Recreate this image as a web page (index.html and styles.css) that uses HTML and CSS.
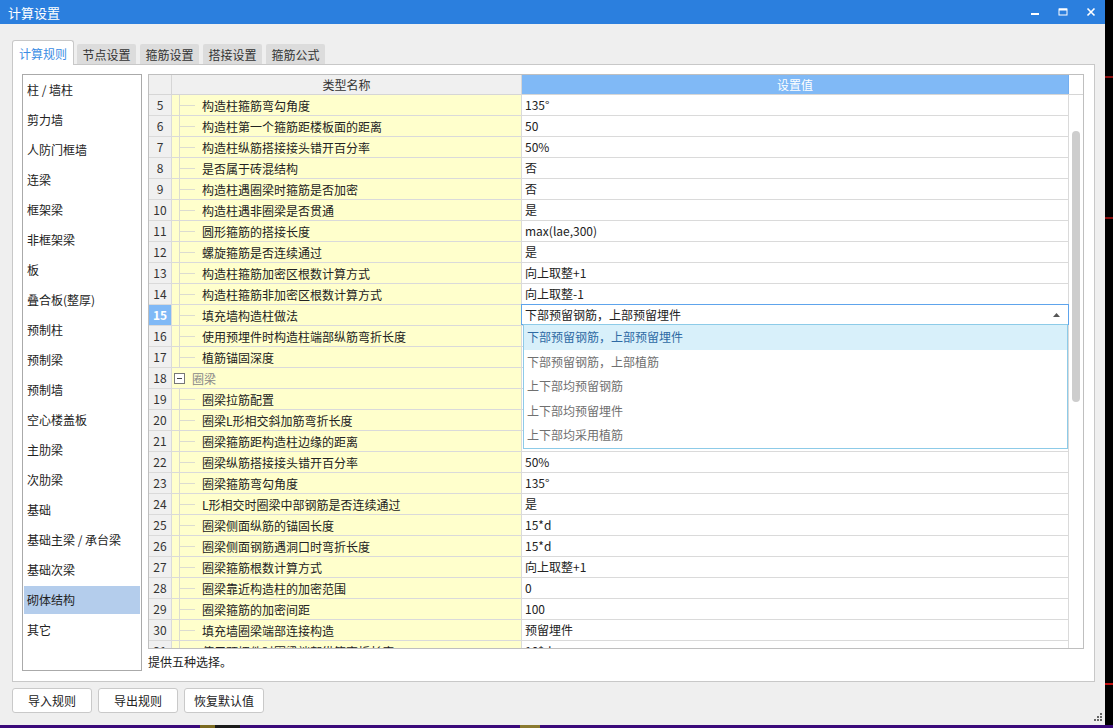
FILE: index.html
```html
<!DOCTYPE html>
<html lang="zh-CN">
<head>
<meta charset="utf-8">
<title>计算设置</title>
<link rel="stylesheet" href="styles.css">
</head>
<body>
<div class="screen">
  <div class="top">
    <div class="window">
      <div class="titlebar">
        <span class="title">计算设置</span>
        <span class="wbtn"><svg width="10" height="10" viewBox="0 0 10 10"><rect x="1" y="6" width="8" height="2" fill="#fff"/></svg></span>
        <span class="wbtn"><svg width="10" height="10" viewBox="0 0 10 10"><rect x="1" y="2" width="8" height="6" fill="none" stroke="#fff" stroke-width="1"/><rect x="1" y="1.5" width="8" height="2" fill="#fff"/></svg></span>
        <span class="wbtn"><svg width="10" height="10" viewBox="0 0 10 10"><path d="M1.5 1.5 L8.5 8.5 M8.5 1.5 L1.5 8.5" stroke="#fff" stroke-width="1.6"/></svg></span>
      </div>

      <div class="tabs">
        <div class="tab active">计算规则</div>
        <div class="tab">节点设置</div>
        <div class="tab">箍筋设置</div>
        <div class="tab">搭接设置</div>
        <div class="tab">箍筋公式</div>
      </div>

      <div class="panel">
        <ul class="side">
          <li>柱 / 墙柱</li>
          <li>剪力墙</li>
          <li>人防门框墙</li>
          <li>连梁</li>
          <li>框架梁</li>
          <li>非框架梁</li>
          <li>板</li>
          <li>叠合板(整厚)</li>
          <li>预制柱</li>
          <li>预制梁</li>
          <li>预制墙</li>
          <li>空心楼盖板</li>
          <li>主肋梁</li>
          <li>次肋梁</li>
          <li>基础</li>
          <li>基础主梁 / 承台梁</li>
          <li>基础次梁</li>
          <li class="sel">砌体结构</li>
          <li>其它</li>
        </ul>

        <div class="main">
          <div class="table">
            <div class="thead">
              <div class="th-num"></div>
              <div class="th-name">类型名称</div>
              <div class="th-val">设置值</div>
              <div class="th-gutter"></div>
            </div>
            <div class="tbody">
              <div class="rows">
                <div class="row"><div class="num">5</div><div class="name"><span class="tree"></span>构造柱箍筋弯勾角度</div><div class="val">135°</div></div>
                <div class="row"><div class="num">6</div><div class="name"><span class="tree"></span>构造柱第一个箍筋距楼板面的距离</div><div class="val">50</div></div>
                <div class="row"><div class="num">7</div><div class="name"><span class="tree"></span>构造柱纵筋搭接接头错开百分率</div><div class="val">50%</div></div>
                <div class="row"><div class="num">8</div><div class="name"><span class="tree"></span>是否属于砖混结构</div><div class="val">否</div></div>
                <div class="row"><div class="num">9</div><div class="name"><span class="tree"></span>构造柱遇圈梁时箍筋是否加密</div><div class="val">否</div></div>
                <div class="row"><div class="num">10</div><div class="name"><span class="tree"></span>构造柱遇非圈梁是否贯通</div><div class="val">是</div></div>
                <div class="row"><div class="num">11</div><div class="name"><span class="tree"></span>圆形箍筋的搭接长度</div><div class="val">max(lae,300)</div></div>
                <div class="row"><div class="num">12</div><div class="name"><span class="tree"></span>螺旋箍筋是否连续通过</div><div class="val">是</div></div>
                <div class="row"><div class="num">13</div><div class="name"><span class="tree"></span>构造柱箍筋加密区根数计算方式</div><div class="val">向上取整+1</div></div>
                <div class="row"><div class="num">14</div><div class="name"><span class="tree"></span>构造柱箍筋非加密区根数计算方式</div><div class="val">向上取整-1</div></div>
                <div class="row"><div class="num cur">15</div><div class="name"><span class="tree"></span>填充墙构造柱做法</div>
                  <div class="val editing">
                    <div class="combo">
                      <span class="combo-text">下部预留钢筋，上部预留埋件</span>
                      <svg class="caret" width="7" height="4" viewBox="0 0 7 4"><path d="M0 4 L3.5 0 L7 4 Z" fill="#555"/></svg>
                      <ul class="combo-list">
                        <li class="hi">下部预留钢筋，上部预留埋件</li>
                        <li>下部预留钢筋，上部植筋</li>
                        <li>上下部均预留钢筋</li>
                        <li>上下部均预留埋件</li>
                        <li>上下部均采用植筋</li>
                      </ul>
                    </div>
                  </div>
                </div>
                <div class="row"><div class="num">16</div><div class="name"><span class="tree"></span>使用预埋件时构造柱端部纵筋弯折长度</div><div class="val"></div></div>
                <div class="row"><div class="num">17</div><div class="name"><span class="tree"></span>植筋锚固深度</div><div class="val"></div></div>
                <div class="row"><div class="num">18</div><div class="name group"><span class="toggle"><svg width="11" height="11" viewBox="0 0 11 11"><rect x="0.5" y="0.5" width="10" height="10" fill="#fff" stroke="#777"/><rect x="3" y="5" width="5" height="1" fill="#444"/></svg></span><span class="gname">圈梁</span></div><div class="val"></div></div>
                <div class="row"><div class="num">19</div><div class="name"><span class="tree"></span>圈梁拉筋配置</div><div class="val"></div></div>
                <div class="row"><div class="num">20</div><div class="name"><span class="tree"></span>圈梁L形相交斜加筋弯折长度</div><div class="val"></div></div>
                <div class="row"><div class="num">21</div><div class="name"><span class="tree"></span>圈梁箍筋距构造柱边缘的距离</div><div class="val"></div></div>
                <div class="row"><div class="num">22</div><div class="name"><span class="tree"></span>圈梁纵筋搭接接头错开百分率</div><div class="val">50%</div></div>
                <div class="row"><div class="num">23</div><div class="name"><span class="tree"></span>圈梁箍筋弯勾角度</div><div class="val">135°</div></div>
                <div class="row"><div class="num">24</div><div class="name"><span class="tree"></span>L形相交时圈梁中部钢筋是否连续通过</div><div class="val">是</div></div>
                <div class="row"><div class="num">25</div><div class="name"><span class="tree"></span>圈梁侧面纵筋的锚固长度</div><div class="val">15*d</div></div>
                <div class="row"><div class="num">26</div><div class="name"><span class="tree"></span>圈梁侧面钢筋遇洞口时弯折长度</div><div class="val">15*d</div></div>
                <div class="row"><div class="num">27</div><div class="name"><span class="tree"></span>圈梁箍筋根数计算方式</div><div class="val">向上取整+1</div></div>
                <div class="row"><div class="num">28</div><div class="name"><span class="tree"></span>圈梁靠近构造柱的加密范围</div><div class="val">0</div></div>
                <div class="row"><div class="num">29</div><div class="name"><span class="tree"></span>圈梁箍筋的加密间距</div><div class="val">100</div></div>
                <div class="row"><div class="num">30</div><div class="name"><span class="tree"></span>填充墙圈梁端部连接构造</div><div class="val">预留埋件</div></div>
                <div class="row"><div class="num">31</div><div class="name"><span class="tree"></span>使用预埋件时圈梁端部纵筋弯折长度</div><div class="val">10*d</div></div>
              </div>
              <div class="gutter"><div class="thumb"></div></div>
            </div>
          </div>
          <div class="desc">提供五种选择。</div>
        </div>
      </div>

      <div class="buttons">
        <button class="btn">导入规则</button>
        <button class="btn">导出规则</button>
        <button class="btn">恢复默认值</button>
      </div>

      <svg class="grip" width="9" height="9" viewBox="0 0 9 9">
        <rect x="6" y="0" width="2" height="2" fill="#666"/>
        <rect x="3" y="3" width="2" height="2" fill="#666"/>
        <rect x="6" y="3" width="2" height="2" fill="#666"/>
        <rect x="0" y="6" width="2" height="2" fill="#666"/>
        <rect x="3" y="6" width="2" height="2" fill="#666"/>
        <rect x="6" y="6" width="2" height="2" fill="#666"/>
      </svg>
    </div>
    <div class="edge">
      <div class="mark m1"></div>
      <div class="mark m2"></div>
      <div class="mark m3"></div>
    </div>
  </div>
  <div class="taskbar"></div>
</div>
</body>
</html>
```

FILE: styles.css
```css
* { box-sizing: border-box; margin: 0; padding: 0; }
html, body { width: 1113px; height: 728px; overflow: hidden; }
body {
  background: #000;
  font-family: "Noto Sans CJK SC", "Microsoft YaHei", "Noto Sans", sans-serif;
  font-size: 12px;
  color: #222;
}
ul { list-style: none; }

.screen { display: flex; flex-direction: column; height: 728px; }
.top { display: flex; height: 725px; }
.window {
  width: 1105px;
  height: 725px;
  background: #efefef;
  display: flex;
  flex-direction: column;
  position: relative;
}
.edge { flex: 1; background: #000; display: flex; flex-direction: column; }
.mark { height: 2px; background: #8a0d0d; }
.m1 { margin-top: 76px; }
.m2 { margin-top: 139px; }
.m3 { margin-top: 464px; background: #c01010; }
.taskbar {
  height: 3px;
  background: linear-gradient(90deg, #3b0a7a 0 200px, #7a6a20 200px 215px, #1a1a1a 215px 240px, #3b0a7a 240px 520px, #8a7a30 520px 540px, #3b0a7a 540px 100%);
}

/* title bar */
.titlebar {
  height: 24px;
  background: #2b7fde;
  color: #fff;
  display: flex;
  align-items: center;
  padding-left: 8px;
  font-size: 13px;
}
.title { flex: 1; }
.wbtn {
  width: 28px;
  height: 24px;
  display: flex;
  align-items: center;
  justify-content: center;
}

/* tabs */
.tabs {
  margin-top: 16px;
  height: 24px;
  padding-left: 12px;
  display: flex;
  align-items: flex-end;
  gap: 4px;
}
.tab {
  width: 59px;
  height: 20px;
  background: #dcdcdc;
  color: #333;
  border-radius: 2px 2px 0 0;
  display: flex;
  align-items: center;
  justify-content: center;
}
.tab.active {
  width: 62px;
  height: 25px;
  margin-right: -1px;
  margin-bottom: -1px;
  background: #fff;
  color: #3b8de4;
  border: 1px solid #c8c8c8;
  border-bottom: none;
  border-radius: 3px 3px 0 0;
  position: relative;
  z-index: 1;
}

/* panel */
.panel {
  margin-left: 12px;
  width: 1083px;
  height: 618px;
  background: #fff;
  border: 1px solid #c8c8c8;
  padding: 9px;
  display: flex;
  gap: 6px;
}
.side {
  width: 120px;
  height: 597px;
  border: 1px solid #aaa;
  padding: 0 1px;
}
.side li {
  height: 30px;
  border-top: 1px solid transparent;
  border-bottom: 1px solid transparent;
  background-clip: padding-box;
  line-height: 28px;
  padding-left: 3px;
  white-space: nowrap;
}
.side li.sel { background-color: #b4cdec; }

.main { display: flex; flex-direction: column; }
.table {
  width: 936px;
  height: 575px;
  border: 1px solid #bfbfbf;
  display: flex;
  flex-direction: column;
  background: #fff;
}
.thead {
  display: flex;
  height: 20px;
  border-bottom: 1px solid #d6d6d6;
  flex: none;
}
.th-num { width: 23px; background: #f0f0f0; border-right: 1px solid #d6d6d6; }
.th-name {
  width: 350px;
  background: #f0f0f0;
  border-right: 1px solid #d6d6d6;
  text-align: center;
  line-height: 19px;
  color: #333;
}
.th-val {
  width: 547px;
  background: #80b9f6;
  color: #fff;
  text-align: center;
  line-height: 19px;
  border-right: 1px solid #73aef0;
}
.th-gutter { flex: 1; }

.tbody { flex: 1; display: flex; min-height: 0; }
.rows { width: 920px; overflow: hidden; }
.row { display: flex; height: 21px; border-bottom: 1px solid #dadada; }
.num {
  width: 23px;
  background: #f0f0f0;
  border-right: 1px solid #dadada;
  text-align: center;
  line-height: 20px;
  color: #333;
}
.num.cur { background: #80b9f6; color: #fff; font-weight: bold; }
.name {
  width: 350px;
  background: #ffffcc;
  border-right: 1px solid #dadada;
  display: flex;
  align-items: center;
  white-space: nowrap;
  overflow: hidden;
}
.tree {
  width: 30px;
  height: 20px;
  flex: none;
  background:
    linear-gradient(#dcdcd0, #dcdcd0) 7px 0 / 1px 100% no-repeat,
    linear-gradient(#dcdcd0, #dcdcd0) 8px 10px / 15px 1px no-repeat;
}
.toggle { width: 20px; padding-left: 2px; display: flex; align-items: center; flex: none; }
.gname { color: #888; }
.val {
  width: 547px;
  border-right: 1px solid #dadada;
  padding-left: 3px;
  line-height: 20px;
  white-space: nowrap;
}
.val.editing { position: relative; }
.combo {
  position: absolute;
  top: -1px;
  left: -1px;
  right: -1px;
  bottom: 0;
  border: 1px solid #5ea4ec;
  background: #fff;
  padding-left: 3px;
  display: flex;
  align-items: center;
  z-index: 2;
}
.combo-text { flex: 1; line-height: 18px; }
.caret { margin-right: 8px; }
.combo-list {
  position: absolute;
  top: 100%;
  left: 1px;
  right: 0;
  height: 125px;
  border: 1px solid #8dcbe8;
  background: #fff;
}
.combo-list li {
  height: 24.6px;
  line-height: 24px;
  padding-left: 3px;
  color: #707070;
}
.combo-list li.hi { background: #d8f0fa; color: #2e6aa4; }

.gutter { flex: 1; padding: 36px 0 0 3px; }
.thumb { width: 8px; height: 271px; background: #cdcdcd; border-radius: 4px; }

.desc { margin-top: 5px; line-height: 16px; }

/* buttons */
.buttons { margin-top: 6px; padding-left: 12px; display: flex; gap: 6px; }
.btn {
  width: 80px;
  height: 25px;
  background: #fff;
  border: 1px solid #c9c9c9;
  border-radius: 3px;
  font-family: inherit;
  font-size: 12px;
  color: #222;
}

.grip { position: absolute; right: 2px; bottom: 3px; }
```
